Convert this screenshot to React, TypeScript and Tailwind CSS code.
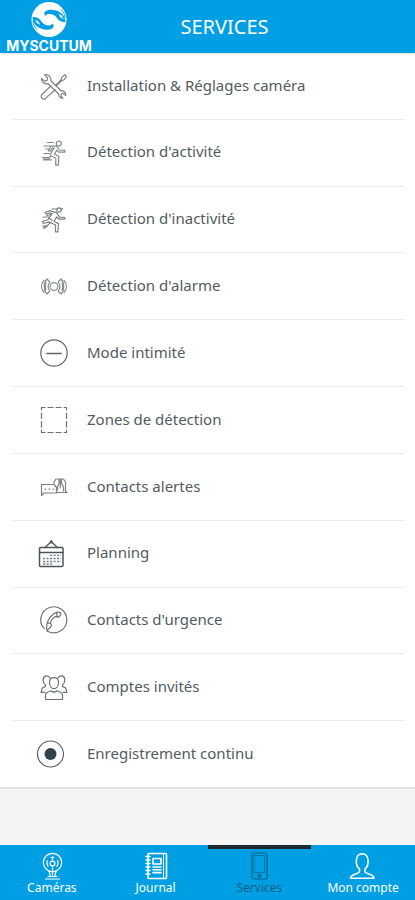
import { clsx } from "clsx";
import type { ReactNode } from "react";
import { useState } from "react";

type Entry = { label: string; icon: ReactNode };

function LineIcon({ children, className, width = "1.2" }: { children: ReactNode; className?: string; width?: string }) {
  return (
    <svg
      viewBox="0 0 28 28"
      fill="none"
      stroke="currentColor"
      strokeWidth={width}
      strokeLinecap="round"
      strokeLinejoin="round"
      aria-hidden="true"
      className={clsx("size-7 shrink-0", className)}
    >
      {children}
    </svg>
  );
}

const services: Entry[] = [
  {
    label: "Installation & Réglages caméra",
    icon: (
      <LineIcon className="text-[#7b8286]">
        <path d="M15.6 13.4 21 8l.8-2.600 3-2.800 1.600 1.600-2.200 3.600-2.600.8-5.200 5.200" />
        <path d="M11.2 13.8 2 22.200a2.700 2.700 0 0 0 3.900 3.900l9.200-8.400" />
        <path d="M4.600 2.800 7.600 6.200 7 8.600l-2.400.6L1.500 6.400c-.4 3.500 3.100 6.200 6.500 5.300l10.700 10.300c-.6 2 1.400 4.200 4.200 4.300l-2-2.300.6-2 2-.6 2.200 2.200c.6-3-1.800-5.200-4.500-4.600L10.900 8.800c.7-3.200-2.200-7-6.300-6" />
      </LineIcon>
    ),
  },
  {
    label: "Détection d'activité",
    icon: (
      <LineIcon className="text-[#81888c]">
        <circle cx="18.800" cy="4.500" r="2.500" />
        <path d="M7.500 3.500h6M4 7h7M5.500 10h4M2.500 18.500h6M3.500 20.800h8M11 7.200l5.500-.2 3 4 5.500.4-.3 1.800-6-.1-1.800-2-2.500 4 4.500 2.500-.6 8.500h-2.600l.1-6.900-5-2.400-2.100 3.200H3.500M11 7.200 8.300 11.500l1.500.8 2.500-3.200h1.800l-4.200 6.600M4 14.500h5" />
      </LineIcon>
    ),
  },
  {
    label: "Détection d'inactivité",
    icon: (
      <LineIcon className="text-[#7b8286]">
        <circle cx="19" cy="4" r="2.200" />
        <path d="m21 4 1.500-1.500M17 3h-5M5 6.500l4.500-1.800 7 2 3 4.500 5.500.3-.3 1.700-6.200-.1-1.800-2.200-2.700 4.300 4.500 2.400-.6 8.200h-2.500l.2-6.800-5-2.500-2.600 2.500-4.500 3M5 6.500l1.500 1.600 3.200-1.300 2.600.7-4.400 6.200-5.700 1.800 1.200 2 6.200-1.700M2.500 20h4M3 11h6M4.500 22l3-2.300M9.500 12.500l2.700 1.800M7 9.500l4-1" />
      </LineIcon>
    ),
  },
  {
    label: "Détection d'alarme",
    icon: (
      <LineIcon className="text-[#858c90]">
        <circle cx="14" cy="14.500" r="3.900" />
        <path d="M9.800 10c-2 2.600-2 6.400 0 9M7 7c-3.600 3.700-3.600 11.300 0 15l2.800-3M7 7l2.800 3M4 8.500c-3.200 3.600-3.200 8.400 0 12M18.200 10c2 2.600 2 6.400 0 9M21 7c3.600 3.700 3.600 11.300 0 15l-2.800-3M21 7l-2.800 3M24 8.500c3.200 3.600 3.200 8.400 0 12M6 11c-1 2.300-1 4.700 0 7M22 11c1 2.300 1 4.700 0 7" />
      </LineIcon>
    ),
  },
  {
    label: "Mode intimité",
    icon: (
      <LineIcon className="text-[#5b6569]">
        <circle cx="14" cy="14" r="13.200" />
        <path d="M7 14.500h14" strokeWidth="1.600" />
      </LineIcon>
    ),
  },
  {
    label: "Zones de détection",
    icon: (
      <LineIcon className="text-[#6a7174]">
        <path d="M1.500 4V1.500H5M8 1.500h5M16 1.500h5M24 1.500h2.500V4M26.500 7v5.500M26.500 15.500V21M26.500 24v2.500H24M21 26.500h-5M13 26.500H8M5 26.500H1.500V24M1.500 21v-5.500M1.500 12.500V7" />
      </LineIcon>
    ),
  },
  {
    label: "Contacts alertes",
    icon: (
      <LineIcon className="text-[#7b8286]">
        <path d="M14 11.500H1.500v11l2.200-2.500h12.800v-5.500M14 11.500V9l2-3h7.500l2 3v9.300l1.500 1.200h-9.500M14 11.500l2.500 3M19 6v4.500l-1.500 3.500v3M21.500 6v4.200l2 3.800v4M20.300 7v8" />
        <path d="M5 16.200h.8M9 16.200h.8M13 16.200h.8" />
      </LineIcon>
    ),
  },
  {
    label: "Planning",
    icon: (
      <LineIcon className="-ml-1 mr-1 text-[#4b565c]">
        <rect x="3.500" y="7.500" width="23.500" height="19" rx="1" strokeWidth="1.500" />
        <path d="M3.500 12.500h23.500" strokeWidth="1.300" />
        <path d="m9 7.500 6.200-5.700 6.300 5.700" strokeWidth="1.400" />
        <circle cx="15.200" cy="1.800" r="1" fill="currentColor" />
        <path d="M14 15.300h11M7 18.500h18M7 21.500h18M7 24h10" strokeWidth="1.300" strokeDasharray="2.200 1.300" strokeLinecap="butt" opacity=".75" />
      </LineIcon>
    ),
  },
  {
    label: "Contacts d'urgence",
    icon: (
      <LineIcon className="text-[#697276]">
        <path d="M4.300 22.700a13 13 0 1 1 3.200 2.500" />
        <path d="M7.200 25.200c.3-1.500 2.300-2.800 3.800-4.800.8-1 .7-1.800-.3-3-.6-.8.3-2.700 3-5.700 1.200-1.300 2.200-1.500 3.500-.8 1.500.5 3-1 3.700-2.700.4-1.300-1.500-2.200-3.800-2-5 1.200-9.300 7-10.300 12.300-.4 2.600-.2 5 .4 6.700M7 17.200l3.500-.2M16.500 6.700l.7 4.200" />
      </LineIcon>
    ),
  },
  {
    label: "Comptes invités",
    icon: (
      <LineIcon className="text-[#697276]">
        <path d="M5.500 26.500V22c.2-2 1.700-3 5.500-4.200 1.800 1.600 4.200 1.600 6 0 3.800 1.200 5.300 2.200 5.500 4.200v4.500zM9.500 9.500c0-3 1.700-4.800 4.500-4.800s4.500 1.800 4.500 4.800c0 3.400-1.900 6.100-4.500 6.100s-4.500-2.700-4.500-6.100z" />
        <path d="M10 5C8.500 1.600 3.200 2.200 3.200 7c0 2.300.9 4 2.300 4.900v1.500L2.300 15l-1.200 4.300h3.700M18 5c1.500-3.400 6.800-2.800 6.800 2 0 2.300-.9 4-2.300 4.900v1.500l3.200 1.600 1.200 4.300h-3.700" />
      </LineIcon>
    ),
  },
  {
    label: "Enregistrement continu",
    icon: (
      <LineIcon className="-ml-1 mr-1 text-[#596367]">
        <circle cx="14.500" cy="14" r="13" />
        <circle cx="14.500" cy="14" r="6" fill="#34434b" stroke="none" />
      </LineIcon>
    ),
  },
];

const tabs: Entry[] = [
  {
    label: "Caméras",
    icon: (
      <LineIcon>
        <circle cx="14.500" cy="10.500" r="9.200" />
        <circle cx="14.500" cy="11.500" r="2.400" />
        <path d="M14.500 4.500v4M13 5.500h3M14.500 14v9M11 19l1.300 5.500M18 19l-1.300 5.500M10 24.500h9M7.500 27h14" />
        <path d="M9.300 8.500c-.6 2-.4 4 .8 5.800M19.700 8.500c.6 2 .4 4-.8 5.800" />
      </LineIcon>
    ),
  },
  {
    label: "Journal",
    icon: (
      <LineIcon width="1.600">
        <rect x="6" y="1.500" width="18.500" height="25" rx="1" />
        <path d="M21.500 1.500v25" strokeWidth="1" />
        <path d="M4 4.500h4M4 8h4M4 11.500h4M4 15h4M4 18.500h4M4 22h4" strokeWidth="1.400" />
        <rect x="11" y="6.500" width="8" height="5.500" />
        <path d="M11 15h8M11 17.800h8M11 20.600h8" />
      </LineIcon>
    ),
  },
  {
    label: "Services",
    icon: (
      <LineIcon>
        <rect x="7" y="1" width="15" height="26" rx="2" />
        <path d="M9.500 3.500h10v17h-10z" strokeWidth="1" opacity=".6" />
        <circle cx="14.500" cy="23.700" r="1.400" />
      </LineIcon>
    ),
  },
  {
    label: "Mon compte",
    icon: (
      <LineIcon width="1.600">
        <path d="M10.500 17c-2.600-2-3.400-5-3.200-8.500.2-4 2.500-6.800 5.900-6.800s5.700 2.800 5.900 6.800c.2 3.500-.6 6.500-3.200 8.500v2.800c.6 1.400 2.500 1.900 5.300 2.700 2.300.7 3.400 1.600 3.800 3.700H1.400c.4-2.100 1.500-3 3.800-3.700 2.800-.8 4.700-1.300 5.300-2.700z" />
      </LineIcon>
    ),
  },
];

function Logo() {
  return (
    <div className="flex w-[98px] shrink-0 flex-col items-center pt-[2px] text-white">
      <svg viewBox="0 0 38 36" aria-hidden="true" className="h-9 w-[38px]">
        <circle cx="19" cy="17.500" r="17.500" fill="currentColor" />
        {/* upper and lower hollows that leave the S */}
        <path d="M35.500 20c-3.500.5-6.500-1-8.500-4-1.600-2.500-4.500-4-8-4-2.200 0-3.200.8-2.700 1.900C14 13 13.500 10.500 16 9c4-2.300 11-1.200 15 2 2.700 2.200 4.200 5.300 4.500 9z" fill="#009fe3" />
        <path d="M2.500 15c3.500-.5 6.500 1 8.500 4 1.600 2.500 4.500 4.500 8 4.500 2.200 0 3.200-.8 2.700-1.900 2.300.9 2.800 3.400.3 4.900-4 2.300-11 1.200-15-2-2.700-2.200-4.200-5.300-4.500-9.500z" fill="#009fe3" />
        <path d="m28.500 11.500 3.200 2 1.800 3.700-3-1.700zM5 17.500l3.500 2 1.700 3.300-2.900-1.300z" fill="currentColor" />
        <path d="M31 7.500c2.700 2.700 3.900 5.500 4 8.500M7 27.500c-2.700-2.700-3.900-5.500-4-8.500" fill="none" stroke="#009fe3" />
      </svg>
      <span className="font-['Inter',sans-serif] text-sm leading-4 font-bold">MYSCUTUM</span>
    </div>
  );
}

export default function App() {
  const [active, setActive] = useState("Services");

  return (
    <div className="flex min-h-screen flex-col bg-[#f4f4f4] font-['Noto_Sans','Open_Sans',sans-serif]">
      <header className="z-10 flex h-[53px] items-center bg-[#009fe3] shadow-sm">
        <Logo />
        <h1 className="flex-1 pr-16 text-center text-xl text-white">SERVICES</h1>
      </header>

      <main className="flex flex-1 flex-col pb-14">
        <ul className="flex flex-1 flex-col border-b-2 border-[#e2e2e2] bg-white pr-[10px] pl-3">
          {services.map((service) => (
            <li key={service.label} className="flex flex-1 border-b border-[#ececec] last:border-b-0">
              <button type="button" className="flex min-h-14 w-full items-center gap-[19px] pl-7 text-left text-[15px] text-[#515b60]">
                {service.icon}
                <span className="pb-[2px]">{service.label}</span>
              </button>
            </li>
          ))}
        </ul>
      </main>

      <nav className="grid h-[55px] grid-cols-4 bg-[#009fe3]">
        {tabs.map((tab) => (
          <button
            key={tab.label}
            type="button"
            aria-current={active === tab.label ? "page" : undefined}
            onClick={() => setActive(tab.label)}
            className={clsx(
              "flex flex-col items-center border-t-4 pt-[3px] text-xs leading-4",
              active === tab.label ? "border-[#1d2b30] text-[#0b5f85]" : "border-transparent text-white",
            )}
          >
            {tab.icon}
            {tab.label}
          </button>
        ))}
      </nav>
    </div>
  );
}
